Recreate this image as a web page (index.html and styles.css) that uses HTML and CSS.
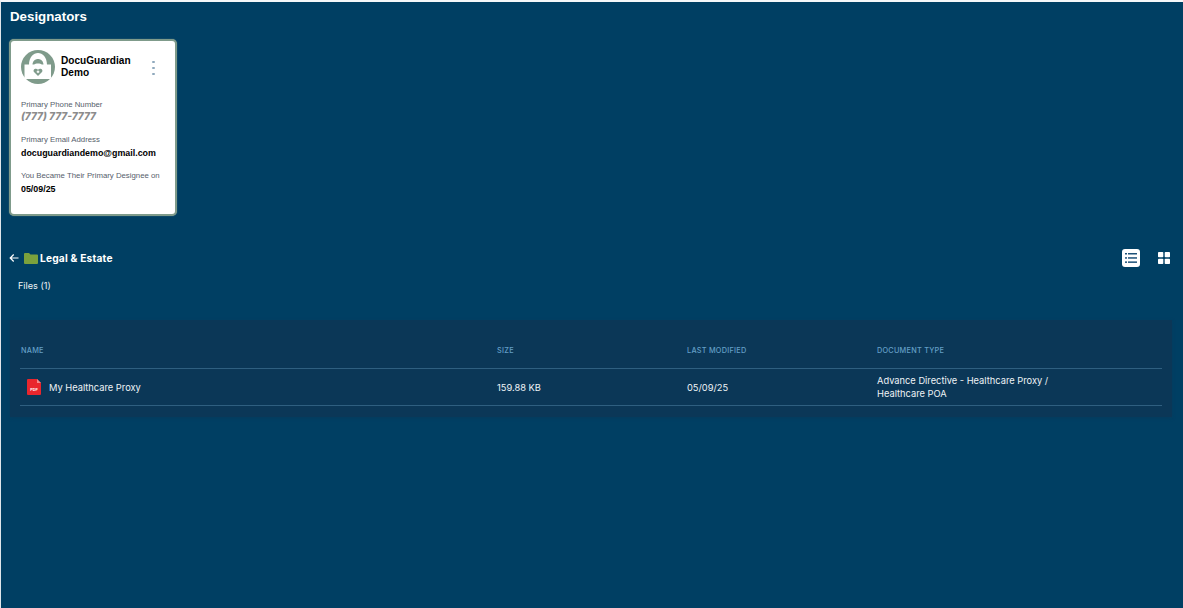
FILE: index.html
```html
<!DOCTYPE html>
<html lang="en">
<head>
<meta charset="utf-8">
<title>Designators</title>
<link rel="stylesheet" href="styles.css">
</head>
<body>
<main class="page">
  <h1 class="title">Designators</h1>
  <section class="card">
    <div class="card-head">
      <svg class="avatar" viewBox="0 0 34 34" aria-hidden="true">
        <circle cx="17" cy="17" r="17" fill="#7f9b8b"/>
        <path d="M8 15 C8 -1 26 -1 26 15 L22.500 15 C22.500 7 11.500 7 11.500 15 Z" fill="#fff"/>
        <path d="M3.500 14.500 H13 C14.500 13 19.500 13 21 14.500 H30 V28 Q30 29 29 29 H4.500 Q3.500 29 3.500 28 Z" fill="#fff"/>
        <path d="M17 26 L13 22 C11.300 19.500 15 17.300 17 19.800 C19 17.300 22.700 19.500 21 22 Z" fill="#7f9b8b"/>
        <rect x="16.400" y="20.500" width="1.200" height="2.600" fill="#fff"/>
        <rect x="15.700" y="21.200" width="2.600" height="1.200" fill="#fff"/>
      </svg>
      <div class="name">DocuGuardian Demo</div>
      <div class="kebab"><i></i><i></i><i></i></div>
    </div>
    <div class="field phone-field">
      <div class="label">Primary Phone Number</div>
      <div class="phone">(777) 777-7777</div>
    </div>
    <div class="field email-field">
      <div class="label">Primary Email Address</div>
      <div class="value">docuguardiandemo@gmail.com</div>
    </div>
    <div class="field date-field">
      <div class="label">You Became Their Primary Designee on</div>
      <div class="value">05/09/25</div>
    </div>
  </section>

  <div class="toolbar">
    <div class="crumb">
      <svg class="back" viewBox="0 0 10 10" aria-hidden="true"><path d="M9.500 5 H1.500 M4.700 1.500 L1.200 5 L4.700 8.500" fill="none" stroke="#fff" stroke-width="1.200"/></svg>
      <svg class="folder" viewBox="0 0 14 11" aria-hidden="true"><path d="M0 1 Q0 0 1 0 H5 L6.500 1.500 H13 Q14 1.500 14 2.500 V10 Q14 11 13 11 H1 Q0 11 0 10 Z" fill="#7ba13c"/></svg>
      <span class="crumb-text">Legal &amp; Estate</span>
    </div>
    <div class="views">
      <div class="view active">
        <svg viewBox="0 0 18 18" aria-hidden="true">
          <rect width="18" height="18" rx="3" fill="#fff"/>
          <g fill="#1d5279"><rect x="3" y="4" width="2" height="1.500"/><rect x="6" y="4" width="9" height="1.500"/><rect x="3" y="8.200" width="2" height="1.500"/><rect x="6" y="8.200" width="9" height="1.500"/><rect x="3" y="12.400" width="2" height="1.500"/><rect x="6" y="12.400" width="9" height="1.500"/></g>
        </svg>
      </div>
      <div class="view">
        <svg viewBox="0 0 14 14" aria-hidden="true"><g fill="#fff"><rect x="1" y="1" width="5.300" height="5.300" rx=".8"/><rect x="7.700" y="1" width="5.300" height="5.300" rx=".8"/><rect x="1" y="7.700" width="5.300" height="5.300" rx=".8"/><rect x="7.700" y="7.700" width="5.300" height="5.300" rx=".8"/></g></svg>
      </div>
    </div>
  </div>
  <div class="files">Files (1)</div>

  <section class="panel">
    <div class="row head">
      <div>NAME</div><div>SIZE</div><div>LAST MODIFIED</div><div>DOCUMENT TYPE</div>
    </div>
    <div class="row body">
      <div class="file">
        <svg class="pdf" viewBox="0 0 14 16" aria-hidden="true">
          <path d="M1 0 H10 L14 4 V15 Q14 16 13 16 H1 Q0 16 0 15 V1 Q0 0 1 0 Z" fill="#e9262d"/>
          <path d="M10 0 L14 4 H10 Z" fill="#f58a8c"/>
          <text class="pdf-label" x="7" y="11.500" text-anchor="middle">PDF</text>
        </svg>
        <span>My Healthcare Proxy</span>
      </div>
      <div>159.88 KB</div>
      <div>05/09/25</div>
      <div class="type">Advance Directive - Healthcare Proxy / Healthcare POA</div>
    </div>
  </section>
</main>
</body>
</html>
```

FILE: styles.css
```css
* { box-sizing: border-box; }
html, body { margin: 0; height: 100%; }
body {
  background: #003f63;
  border-top: 2px solid #f4f7f9;
  border-left: 1px solid #dfe6ea;
  font-family: "Liberation Sans", Arial, sans-serif;
  color: #fff;
  overflow: hidden;
}
.page { padding: 7px 10px 0 8px; }
.title {
  margin: 0 0 0 1px;
  font-size: 13.300px;
  line-height: 15px;
  font-weight: 700;
}
.card {
  margin-top: 15px;
  width: 168px;
  height: 177px;
  background: #fff;
  border: 2px solid #7f9b8b;
  border-radius: 5px;
  padding: 9px 10px 0;
  color: #000;
  box-shadow: 0 0 1px #8aa090;
}
.card-head { display: flex; align-items: center; height: 34px; }
.avatar { width: 34px; height: 34px; flex: none; }
.name {
  margin-left: 6px;
  width: 74px;
  font-size: 10.100px;
  line-height: 12px;
  font-weight: 700;
}
.kebab { margin-left: 17px; display: flex; flex-direction: column; gap: 3.500px; padding-top: 2px; }
.kebab i { width: 2.500px; height: 2.500px; border-radius: 50%; background: #8fa9bd; }
.label { font-size: 7.800px; line-height: 11px; color: #56606b; white-space: nowrap; }
.value { font-size: 8.900px; line-height: 12px; font-weight: 700; margin-top: 2px; white-space: nowrap; }
.phone-field { margin-top: 15px; }
.email-field { margin-top: 11px; }
.email-field .value { margin-top: 2px; }
.date-field { margin-top: 11px; }
.phone {
  font-family: "Inter", sans-serif;
  font-size: 10.100px;
  line-height: 13px;
  font-weight: 800;
  font-style: italic;
  color: #8c8c8c;
}
.toolbar {
  margin-top: 32px;
  display: flex;
  align-items: center;
  justify-content: space-between;
  height: 20px;
  font-family: "Inter", sans-serif;
}
.crumb { display: flex; align-items: center; }
.back { width: 10px; height: 10px; margin-right: 5px; }
.folder { width: 14px; height: 11px; margin-right: 2px; }
.crumb-text { font-size: 10.200px; font-weight: 700; letter-spacing: .2px; }
.views { display: flex; align-items: center; gap: 17px; margin-right: 2px; }
.view { display: flex; }
.view svg { display: block; width: 18px; height: 18px; }
.view:last-child svg { width: 14px; height: 14px; }
.files {
  margin: 12px 0 0 9px;
  font-family: "Inter", sans-serif;
  font-size: 9.100px;
  line-height: 12px;
  color: #eef3f6;
}
.panel {
  margin: 28px 0 0 1px;
  width: 1162px;
  height: 97px;
  background: #0b3757;
  padding: 10px 10px 0;
  font-family: "Inter", sans-serif;
  box-shadow: 0 1px 3px #063c5e;
}
.row {
  display: grid;
  grid-template-columns: 476px 190px 190px 1fr;
  padding-left: 1px;
  border-bottom: 1px solid #2f5f80;
}
.head {
  height: 39px;
  padding-top: 3px;
  align-items: center;
  font-size: 7.300px;
  font-weight: 500;
  letter-spacing: .25px;
  color: #639fc6;
}
.body {
  height: 37px;
  align-items: center;
  font-size: 9.300px;
  line-height: 13px;
  color: #eef3f6;
}
.file { display: flex; align-items: center; padding-left: 6px; gap: 8px; }
.pdf { width: 14px; height: 16px; flex: none; }
.pdf-label { font-family: "Liberation Sans", Arial, sans-serif; font-size: 3.800px; font-weight: 700; fill: #fff; }
.type { width: 190px; }
```
